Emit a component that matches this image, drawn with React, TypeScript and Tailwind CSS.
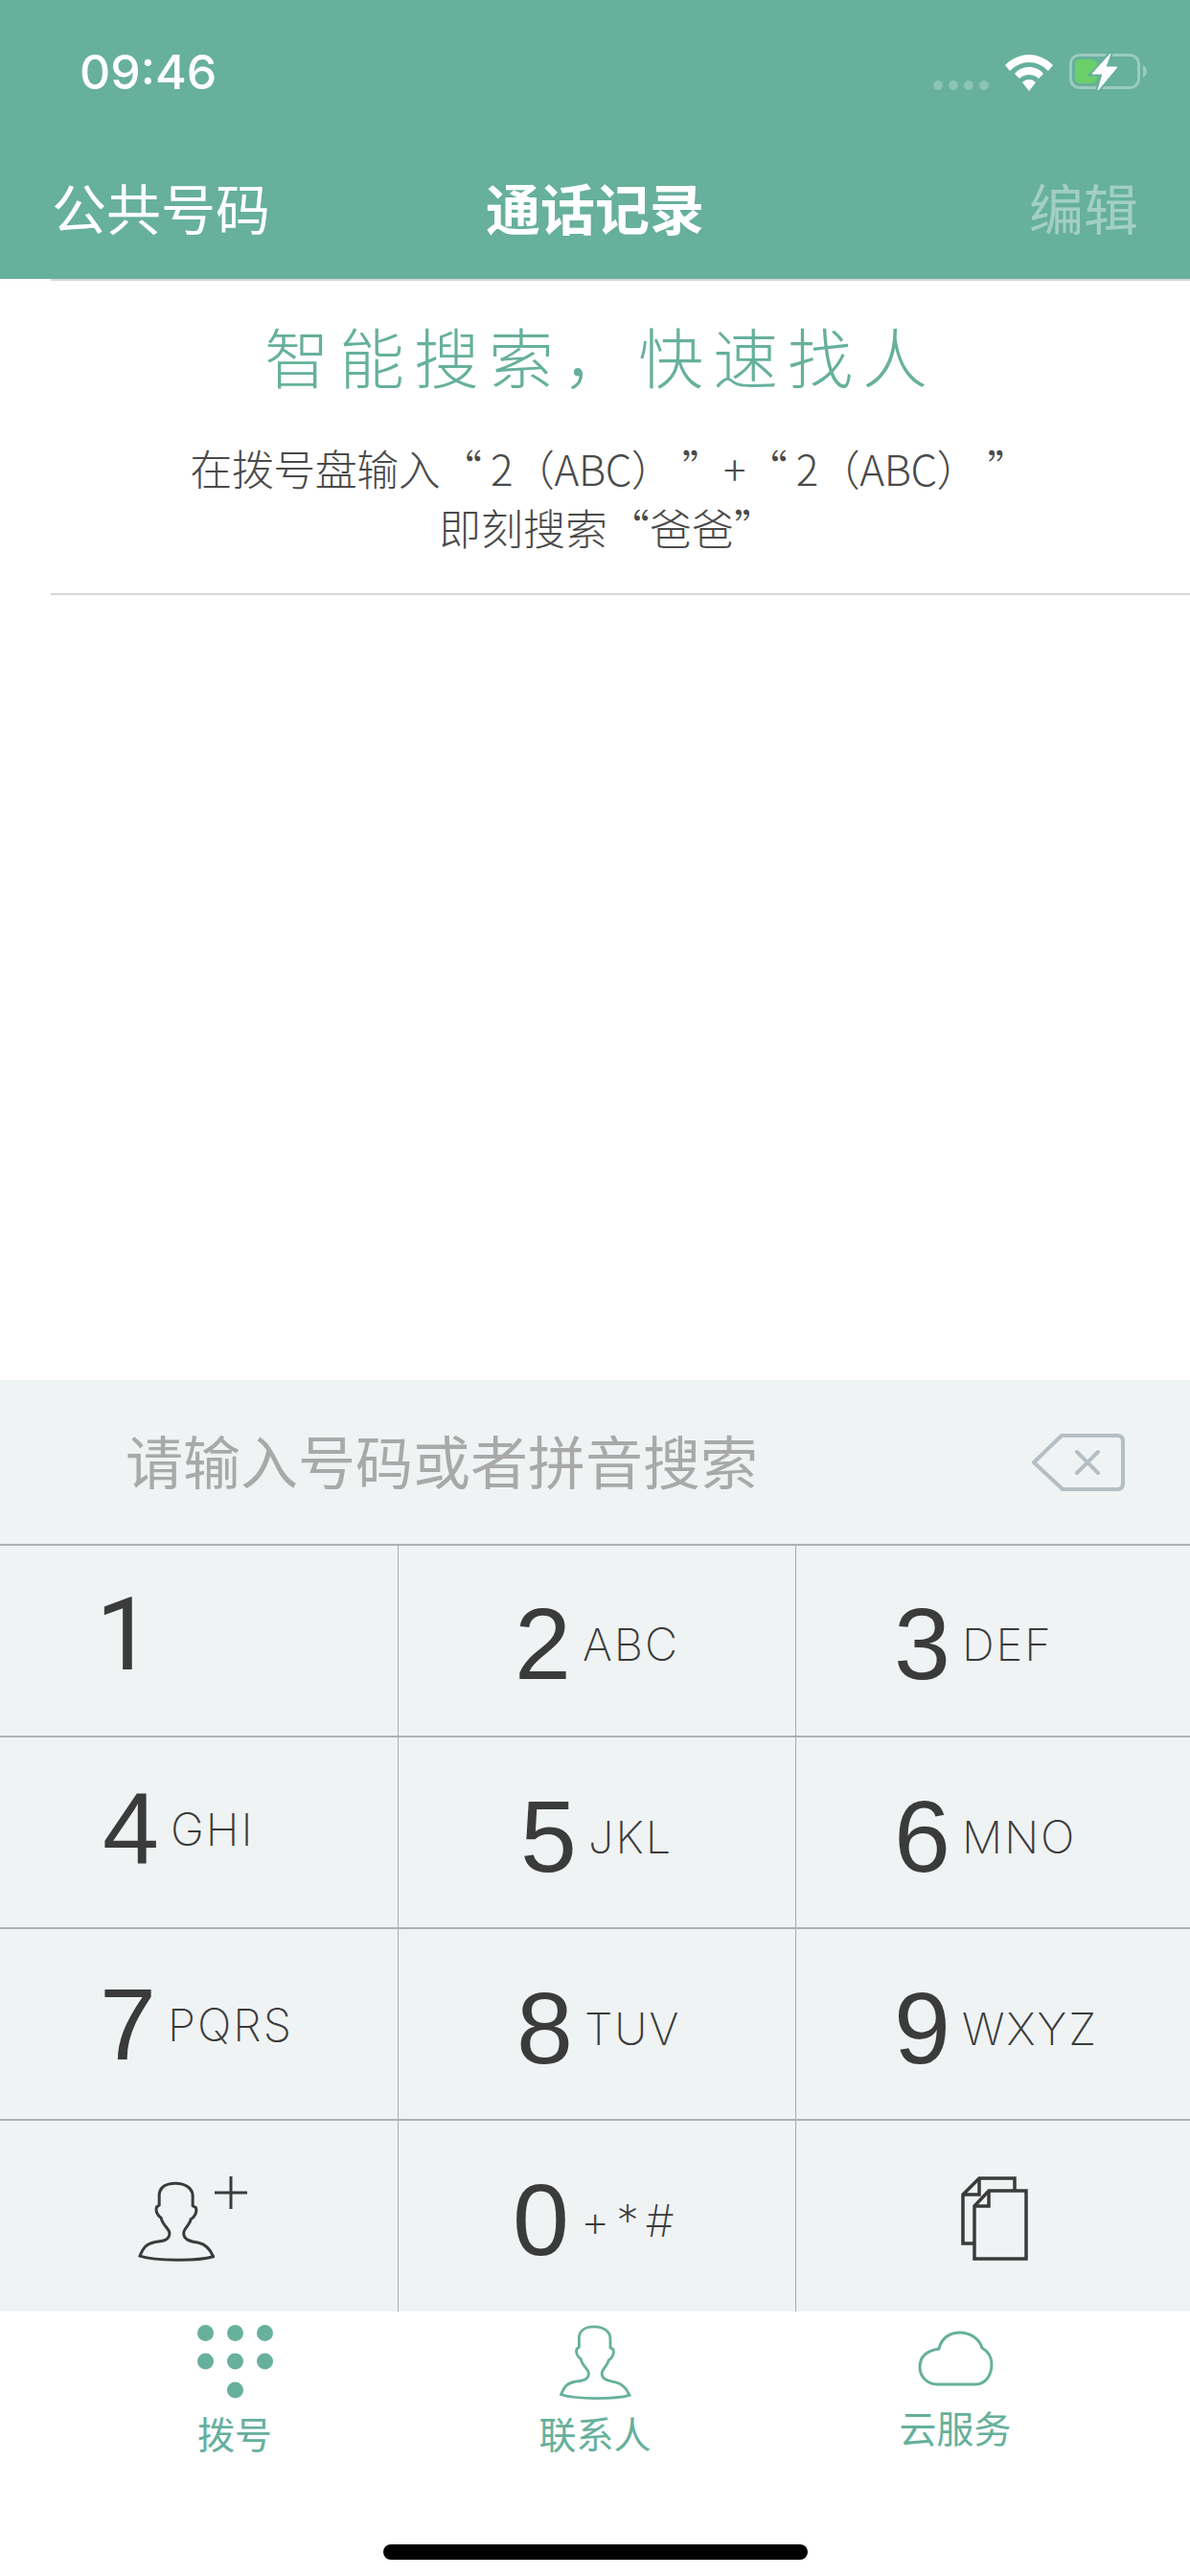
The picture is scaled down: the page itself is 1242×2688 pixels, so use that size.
const cjk = "font-['Noto_Sans_CJK_SC',sans-serif]";

type Key = {
  digit: string;
  letters: string;
  pl: string;
  pt: string;
};

const rows: Key[][] = [
  [
    { digit: '1', letters: '', pl: 'pl-[100px]', pt: 'pt-[40px]' },
    { digit: '2', letters: 'ABC', pl: 'pl-[121px]', pt: 'pt-[49px]' },
    { digit: '3', letters: 'DEF', pl: 'pl-[102px]', pt: 'pt-[49px]' },
  ],
  [
    { digit: '4', letters: 'GHI', pl: 'pl-[107px]', pt: 'pt-[42px]' },
    { digit: '5', letters: 'JKL', pl: 'pl-[127px]', pt: 'pt-[50px]' },
    { digit: '6', letters: 'MNO', pl: 'pl-[102px]', pt: 'pt-[50px]' },
  ],
  [
    { digit: '7', letters: 'PQRS', pl: 'pl-[104px]', pt: 'pt-[46px]' },
    { digit: '8', letters: 'TUV', pl: 'pl-[123px]', pt: 'pt-[50px]' },
    { digit: '9', letters: 'WXYZ', pl: 'pl-[102px]', pt: 'pt-[50px]' },
  ],
];

function PersonIcon({ className, color, width }: { className?: string; color: string; width: number }) {
  return (
    <svg className={className} viewBox="74 144 238 252" fill="none" stroke={color} strokeWidth={width}>
      <path d="M80 376C90 350 100 338 125 333C150 330 172 328 172 305C172 292 150 280 146 258C134 250 128 235 132 224L140 218L140 185C142 160 165 150 190 150C220 150 244 165 244 190L244 220L254 226C258 240 250 255 238 262C235 280 215 292 216 305C216 328 240 330 262 335C285 340 298 355 308 378C260 392 130 392 80 376Z" />
    </svg>
  );
}

function KeyCell({ item }: { item: Key }) {
  const family = item.digit === '1' ? "font-['Roboto',sans-serif]" : "font-['Liberation_Sans',sans-serif]";
  const spacing = item.digit === '0' ? 'tracking-[7px]' : 'tracking-[2px]';
  return (
    <div className={`h-full border-r border-[#a9acad] last:border-r-0 ${item.pl} ${item.pt}`}>
      <div className={`${family} text-[#3b3b3b] text-[106px] leading-none whitespace-nowrap`}>
        {item.digit}
        {item.letters && (
          <span className={`ml-[12px] align-[19px] font-['Inter',sans-serif] font-extralight text-[47px] ${spacing}`}>
            {item.letters}
          </span>
        )}
      </div>
    </div>
  );
}

export default function App() {
  return (
    <div lang="zh-CN" className={`w-[1242px] h-[2688px] bg-white overflow-hidden ${cjk}`}>
      {/* header */}
      <div className="h-[291px] bg-[#66b09c] flex flex-col">
        <div className="flex items-center justify-between h-[150px] pl-[83px] pr-[45px]">
          <span className="font-['Inter',sans-serif] font-medium text-[50px] leading-none text-white">09:46</span>
          <div className="flex items-end">
            <div className="flex gap-[6px] mb-[1px]">
              <span className="w-[10px] h-[10px] rounded-full bg-white/25" />
              <span className="w-[10px] h-[10px] rounded-full bg-white/25" />
              <span className="w-[10px] h-[10px] rounded-full bg-white/25" />
              <span className="w-[10px] h-[10px] rounded-full bg-white/25" />
            </div>
            <svg className="ml-[17px] w-[50px] h-[38px]" viewBox="0 0 50 38" fill="white">
              <path d="M25 0C34 0 43 4 50 11L45 17C39 11 32 8 25 8C18 8 11 11 5 17L0 11C7 4 16 0 25 0Z" />
              <path d="M25 13C31 13 36 15 40 20L35 25C32 22 29 21 25 21C21 21 18 22 15 25L10 20C14 15 19 13 25 13Z" />
              <path d="M25 26C28 26 30 27 32 29L25 38L18 29C20 27 22 26 25 26Z" />
            </svg>
            <svg className="ml-[17px] w-[81px] h-[40px]" viewBox="0 0 81 40" fill="none">
              <rect x="1.5" y="2.5" width="71" height="34" rx="9" stroke="white" strokeOpacity="0.35" strokeWidth="3" />
              <path d="M77 13C80 15 81 17 81 19.5C81 22 80 24 77 26Z" fill="white" fillOpacity="0.35" />
              <rect x="6" y="7" width="23" height="25" rx="5" fill="#6bcf6a" />
              <path d="M43 1L24 22H35L30 39L50 15H38Z" stroke="#66b09c" strokeWidth="5" />
              <path d="M43 1L24 22H35L30 39L50 15H38Z" fill="white" stroke="white" strokeWidth="1" />
            </svg>
          </div>
        </div>
        <div className="flex items-center h-[130px] px-[54px] text-[57px] leading-none text-white">
          <span className="flex-1">公共号码</span>
          <span className="font-bold">通话记录</span>
          <span className="flex-1 text-right text-white/40">编辑</span>
        </div>
      </div>

      {/* tips */}
      <div className="h-[1149px] pl-[53px]">
        <div className="h-[330px] border-y-2 border-[#d6d6d6] flex flex-col items-center text-center pr-[53px]">
          <div className="mt-[32px] pl-[12px] text-[68px] leading-[92px] tracking-[10px] text-[#66b09c] font-light">智能搜索，快速找人</div>
          <div className="mt-[40px] pl-[26px] text-[44px] leading-[62px] text-[#4a4a4a] font-light whitespace-nowrap">
            <span className="tracking-[-0.5px] ml-[4px]">在拨号盘输入“ 2（ABC） ”+“ 2（ABC） ”</span>
            <br />
            即刻搜索“爸爸”
          </div>
        </div>
      </div>

      {/* keypad */}
      <div className="bg-[#eff3f4]">
        <div className="h-[173px] flex items-center justify-between pl-[131px] pr-[68px] border-b-2 border-[#aeb1b2]">
          <span className="text-[60px] leading-none text-[#a9a9a9] mb-[6px]">请输入号码或者拼音搜索</span>
          <svg className="w-[97px] h-[60px]" viewBox="0 0 97 60" fill="none" stroke="#b4bfc4" strokeWidth="4" strokeLinejoin="round">
            <path d="M31 2H89Q95 2 95 8V52Q95 58 89 58H32L2 30Z" />
            <path d="M47 19L69 41M69 19L47 41" strokeLinecap="round" />
          </svg>
        </div>
        {rows.map((row, i) => (
          <div key={i} className="grid grid-cols-[416px_415px_1fr] h-[200px] border-b-2 border-[#aeb1b2]">
            {row.map((item) => (
              <KeyCell key={item.digit} item={item} />
            ))}
          </div>
        ))}
        <div className="grid grid-cols-[416px_415px_1fr] h-[199px]">
          <div className="h-full border-r border-[#a9acad] flex items-start pl-[144px] pt-[58px]">
            <PersonIcon className="w-[80px] h-[85px] mt-[5px]" color="#3b3b3b" width={9} />
            <svg className="w-[34px] h-[34px]" viewBox="0 0 34 34" stroke="#3b3b3b" strokeWidth="3">
              <path d="M0 17H34M17 0V34" />
            </svg>
          </div>
          <KeyCell item={{ digit: '0', letters: '+*#', pl: 'pl-[119px]', pt: 'pt-[50px]' }} />
          <div className="pl-[172px] pt-[58px]">
            <svg className="w-[70px] h-[88px]" viewBox="0 0 70 88" fill="none" stroke="#3b3b3b" strokeWidth="3.5">
              <path d="M14 70H2V19L19 2H56V14" />
              <path d="M2 19H19V2" />
              <path d="M14 31L29 15H68V86H14Z" fill="#eff3f4" />
              <path d="M14 31H29V15" />
            </svg>
          </div>
        </div>
      </div>

      {/* tab bar */}
      <div className="grid grid-cols-3 px-[57px] text-[#66b09c] text-[39px] leading-none text-center">
        <div className="flex flex-col items-center pt-[14px]">
          <svg className="w-[79px] h-[79px]" viewBox="0 0 79 79" fill="#66b09c">
            <circle cx="8.5" cy="8.5" r="8.5" />
            <circle cx="39.5" cy="8.5" r="8.5" />
            <circle cx="70.5" cy="8.5" r="8.5" />
            <circle cx="8.5" cy="38" r="8.5" />
            <circle cx="39.5" cy="38" r="8.5" />
            <circle cx="70.5" cy="38" r="8.5" />
            <circle cx="39.5" cy="68" r="8.5" />
          </svg>
          <span className="mt-[14px]">拨号</span>
        </div>
        <div className="flex flex-col items-center pt-[14px]">
          <PersonIcon className="w-[78px] h-[79px]" color="#66b09c" width={9} />
          <span className="mt-[14px]">联系人</span>
        </div>
        <div className="flex flex-col items-center pt-[20px]">
          <svg className="w-[79px] h-[58px]" viewBox="0 0 79 58" fill="none" stroke="#66b09c" strokeWidth="3">
            <path d="M20 56L60 56C71 56 77 46 77 35C77 27 74 22 67 18C64 8 54 2 44 2C32 2 24 9 22 19C8 21 2 28 2 38C2 48 10 56 20 56Z" />
          </svg>
          <span className="mt-[23px]">云服务</span>
        </div>
      </div>
      <div className="flex justify-center mt-[97px]">
        <div className="w-[443px] h-[16px] rounded-full bg-black" />
      </div>
    </div>
  );
}
